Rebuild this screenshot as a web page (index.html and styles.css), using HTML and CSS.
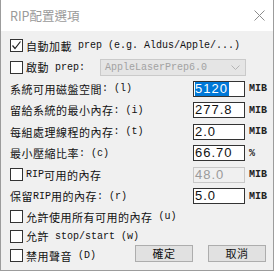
FILE: index.html
```html
<!DOCTYPE html>
<html lang="zh-Hant">
<head>
  <meta charset="UTF-8">
  <meta name="viewport" content="width=device-width, initial-scale=1.0">
  <title>RIP配置選項</title>
  <link rel="stylesheet" href="styles.css">
</head>
<body>

<div class="dialog">
  <div class="titlebar">
    <span class="title">RIP配置選項</span>
    <svg class="close" width="11" height="11" viewBox="0 0 11 11">
      <path d="M0.5 0.5L10.5 10.5M10.5 0.5L0.5 10.5" stroke="#8c8c8c" stroke-width="1" fill="none"/>
    </svg>
  </div>

  <div class="content">
    <div class="row">
      <span class="box"><svg width="11" height="11" viewBox="0 0 11 11"><path d="M1.5 5.5L4 8.5L9.5 1.5" stroke="#222" stroke-width="1.2" fill="none"/></svg></span>
      自動加載<span class="en">&nbsp;prep (e.g. Aldus/Apple/...)</span>
    </div>
    <div class="row">
      <span class="box"></span>
      啟動<span class="en">&nbsp;prep:</span>
      <div class="select">
        <span>AppleLaserPrep6.0</span>
        <svg width="9" height="5" viewBox="0 0 9 5"><path d="M0.5 0.5L4.5 4.5L8.5 0.5" stroke="#b4b4b4" fill="none"/></svg>
      </div>
    </div>
    <div class="row">
      系統可用磁盤空間<span class="en">: (l)</span>
      <div class="field"><span class="picked">5120</span></div>
      <span class="unit">MIB</span>
    </div>
    <div class="row">
      留給系統的最小內存<span class="en">: (i)</span>
      <div class="field">277.8</div>
      <span class="unit">MIB</span>
    </div>
    <div class="row">
      每組處理線程的內存<span class="en">: (t)</span>
      <div class="field">2.0</div>
      <span class="unit">MIB</span>
    </div>
    <div class="row">
      最小壓縮比率<span class="en">: (c)</span>
      <div class="field">66.70</div>
      <span class="unit">%</span>
    </div>
    <div class="row">
      <span class="box"></span>
      <span class="en">RIP</span>可用的內存
      <div class="field off">48.0</div>
      <span class="unit">MIB</span>
    </div>
    <div class="row">
      保留<span class="en">RIP</span>用的內存<span class="en">: (r)</span>
      <div class="field">5.0</div>
      <span class="unit">MIB</span>
    </div>
    <div class="row short">
      <span class="box"></span>
      允許使用所有可用的內存<span class="en">&nbsp;(u)</span>
    </div>
    <div class="row short">
      <span class="box"></span>
      允許<span class="en">&nbsp;stop/start (w)</span>
    </div>
    <div class="row short">
      <span class="box"></span>
      禁用聲音<span class="en">&nbsp;(D)</span>
      <div class="buttons">
        <div class="btn">確定</div>
        <div class="btn">取消</div>
      </div>
    </div>
  </div>
</div>

</body>
</html>
```

FILE: styles.css
```css
* {
  box-sizing: border-box;
}
body {
  margin: 0;
  background: #fff;
  font-family: "Noto Sans CJK TC", sans-serif;
  font-size: 11px;
  color: #111;
}
.dialog {
  width: 274px;
  height: 271px;
  border: 1px solid #9c9c9c;
  border-top: 0;
  background: #f0f0f0;
}
.titlebar {
  height: 31px;
  background: #fff;
  display: flex;
  align-items: center;
  justify-content: space-between;
  padding: 0 8px 0 9px;
}
.title {
  font-size: 12.5px;
  color: #9a9a9a;
}
.close {
  display: block;
}
.content {
  padding: 4px 7px 0 9px;
}
.row {
  display: flex;
  align-items: center;
  height: 21.5px;
  white-space: nowrap;
  letter-spacing: 0.5px;
}
.row.short {
  height: 19.5px;
}
.en {
  font-family: "Liberation Mono", monospace;
  font-size: 10px;
  letter-spacing: 0;
  white-space: pre;
}
.box {
  width: 13px;
  height: 13px;
  margin-right: 3px;
  border: 1px solid #333;
  background: #fff;
  display: flex;
  align-items: center;
  justify-content: center;
  flex-shrink: 0;
}
.select {
  margin-left: auto;
  margin-right: 20px;
  width: 146px;
  height: 17px;
  padding: 0 5px 0 4px;
  background: #e5e5e5;
  border: 1px solid #cacaca;
  color: #a2a2a2;
  display: flex;
  align-items: center;
  justify-content: space-between;
  font-family: "Liberation Mono", monospace;
  font-size: 10px;
  letter-spacing: 0;
}
.field {
  margin-left: auto;
  width: 52px;
  height: 16px;
  padding-left: 1px;
  background: #fff;
  border: 1px solid #333;
  font-family: "Liberation Sans", sans-serif;
  font-size: 13px;
  letter-spacing: 1px;
  line-height: 14px;
  color: #111;
}
.field.off {
  background: #f0f0f0;
  border-color: #c8c8c8;
  color: #9a9a9a;
}
.picked {
  display: inline-block;
  background: #0078d7;
  color: #fff;
  padding-right: 1px;
}
.unit {
  width: 21px;
  padding-left: 4px;
  font-family: "Liberation Mono", monospace;
  font-weight: bold;
  font-size: 10px;
  letter-spacing: 0;
  color: #222;
}
.buttons {
  margin-left: auto;
  margin-bottom: 4px;
  display: flex;
  gap: 15px;
}
.btn {
  width: 58px;
  height: 17px;
  background: #e1e1e1;
  border: 1px solid #adadad;
  text-align: center;
  line-height: 15px;
  font-size: 11px;
}
```
